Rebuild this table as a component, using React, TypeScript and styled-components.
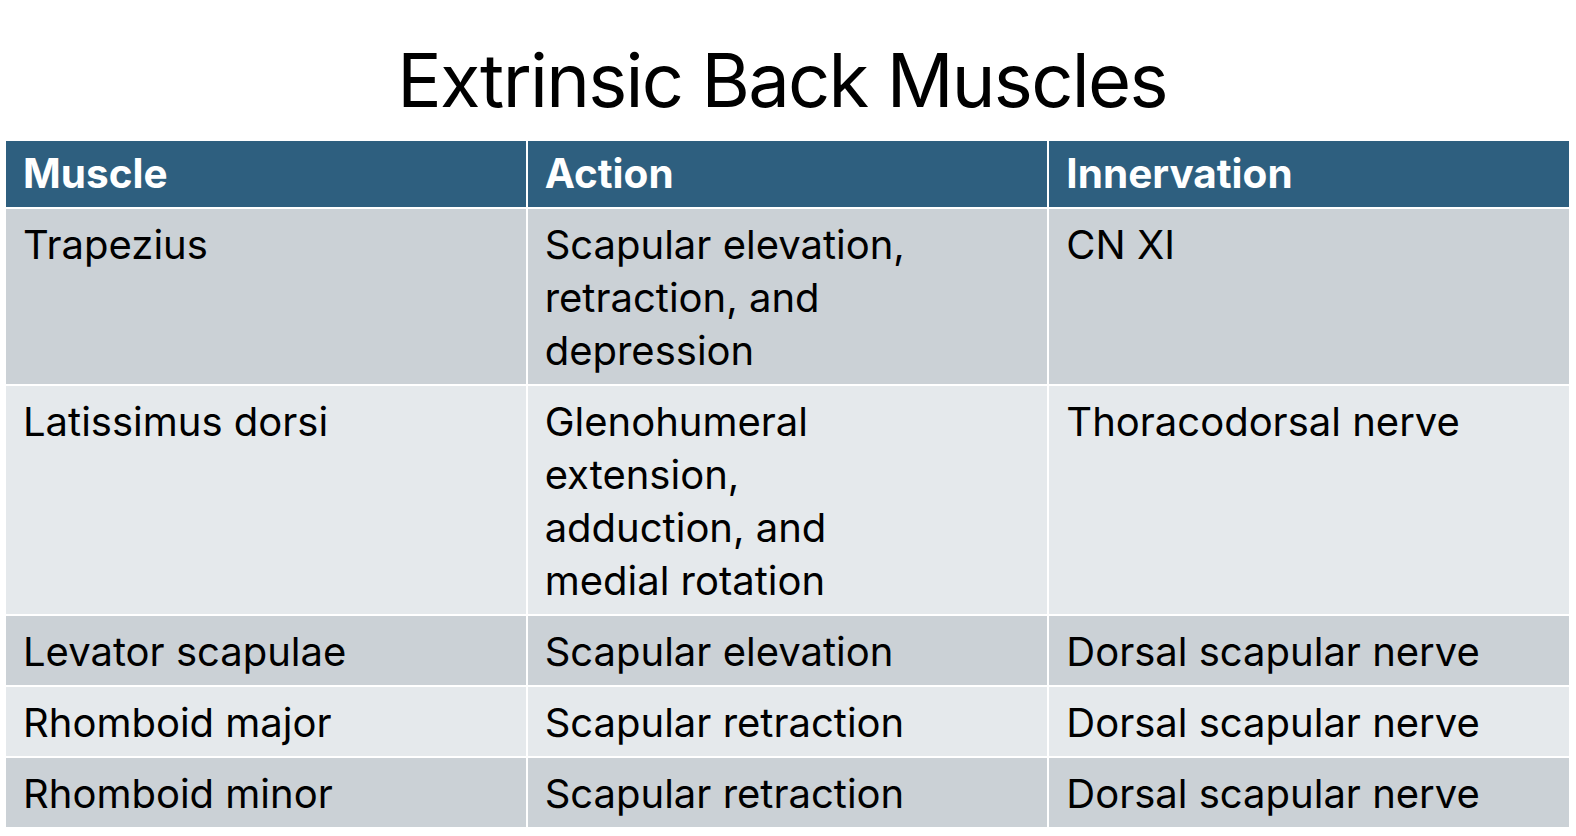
import React from "react";
import styled, { createGlobalStyle } from "styled-components";

const Global = createGlobalStyle`
  html, body { margin: 0; padding: 0; background: #ffffff; }
  body { font-family: Inter, "Open Sans", sans-serif; color: #000; }
`;

const Page = styled.div`
  width: 1576px;
  height: 836px;
  overflow: hidden;
  background: #fff;
  display: flex;
  flex-direction: column;
`;

const Title = styled.h1`
  margin: 0;
  height: 141px;
  display: flex;
  align-items: center;
  justify-content: center;
  padding: 18px 12px 0 0;
  font-family: Inter, sans-serif;
  font-weight: 400;
  font-size: 74px;
  letter-spacing: -1.7px;
  box-sizing: border-box;
`;

const Grid = styled.div`
  margin-left: 6px;
  width: 1563px;
  display: grid;
  grid-template-columns: repeat(3, 1fr);
  gap: 2px;
  background: #fff;
`;

const HeadCell = styled.div`
  background: #2e5f7f;
  color: #fff;
  font-weight: 700;
  font-size: 40.5px;
  line-height: 50px;
  padding: 8px 17px;
`;

const Cell = styled.div<{ $shade: boolean }>`
  background: ${(p) => (p.$shade ? "#cbd1d6" : "#e5e9ec")};
  font-size: 40px;
  line-height: 53px;
  padding: 9px 17px 7px;
`;

const rows: [string, string[], string][] = [
  ["Trapezius", ["Scapular elevation,", "retraction, and", "depression"], "CN XI"],
  ["Latissimus dorsi", ["Glenohumeral", "extension,", "adduction, and", "medial rotation"], "Thoracodorsal nerve"],
  ["Levator scapulae", ["Scapular elevation"], "Dorsal scapular nerve"],
  ["Rhomboid major", ["Scapular retraction"], "Dorsal scapular nerve"],
  ["Rhomboid minor", ["Scapular retraction"], "Dorsal scapular nerve"],
];

export default function App() {
  return (
    <Page>
      <Global />
      <Title>Extrinsic Back Muscles</Title>
      <Grid>
        <HeadCell>Muscle</HeadCell>
        <HeadCell>Action</HeadCell>
        <HeadCell>Innervation</HeadCell>
        {rows.map(([m, a, n], i) => (
          <React.Fragment key={m}>
            <Cell $shade={i % 2 === 0}>{m}</Cell>
            <Cell $shade={i % 2 === 0}>
              {a.map((l, j) => (
                <React.Fragment key={j}>
                  {l}
                  {j < a.length - 1 && <br />}
                </React.Fragment>
              ))}
            </Cell>
            <Cell $shade={i % 2 === 0}>{n}</Cell>
          </React.Fragment>
        ))}
      </Grid>
    </Page>
  );
}
